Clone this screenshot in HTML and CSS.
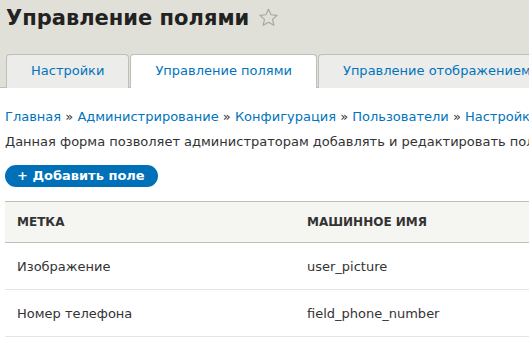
FILE: index.html
```html
<!DOCTYPE html>
<html>
<head>
    <link rel="stylesheet" href="styles.css">
</head>
<body>
    <header class="branding">
        <h1 class="page-title">
            Управление полями
            <svg class="star" width="21" height="21" viewBox="0 0 24 24">
                <path d="M12 2.5l2.9 6.3 6.9.7-5.2 4.6 1.5 6.8L12 17.4l-6.1 3.5 1.5-6.8-5.2-4.6 6.9-.7z" fill="none" stroke="#a6a6a0" stroke-width="1.3" stroke-linejoin="round"/>
            </svg>
        </h1>
        <ul class="tabs">
            <li class="tab"><a href="#">Настройки</a></li>
            <li class="tab active"><a href="#">Управление полями</a></li>
            <li class="tab"><a href="#">Управление отображением</a></li>
        </ul>
    </header>

    <main class="page">
        <nav class="breadcrumb">
            <a href="#">Главная</a> » <a href="#">Администрирование</a> » <a href="#">Конфигурация</a> » <a href="#">Пользователи</a> » <a href="#">Настройки учётных записей</a>
        </nav>
        <p class="help">Данная форма позволяет администраторам добавлять и редактировать поля для хранения данных пользователей.</p>

        <a href="#" class="button">+ Добавить поле</a>

        <table class="fields">
            <thead>
                <tr>
                    <th class="col-label">Метка</th>
                    <th>Машинное имя</th>
                </tr>
            </thead>
            <tbody>
                <tr>
                    <td>Изображение</td>
                    <td>user_picture</td>
                </tr>
                <tr>
                    <td>Номер телефона</td>
                    <td>field_phone_number</td>
                </tr>
            </tbody>
        </table>
    </main>
</body>
</html>
```

FILE: styles.css
```css
body {
    margin: 0;
    font-family: "DejaVu Sans", sans-serif;
    font-size: 13px;
    color: #333;
    background: #fff;
    overflow: hidden;
    width: 529px;
}

a {
    color: #0074bd;
    text-decoration: none;
}

.branding {
    background: #e0e0d8;
    padding: 0 0 0 6px;
    border-bottom: 1px solid #bfbfba;
}

.page-title {
    display: flex;
    align-items: center;
    gap: 9px;
    margin: 0;
    padding: 3px 0 0;
    font-size: 21px;
    line-height: 31px;
    color: #222;
    font-weight: bold;
    white-space: nowrap;
}

.star {
    margin-top: -2px;
}

.tabs {
    display: flex;
    margin: 20px 0 -1px;
    padding: 0;
    list-style: none;
    white-space: nowrap;
}

.tab {
    border: 1px solid #bfbfba;
    border-bottom: none;
    border-radius: 4px 4px 0 0;
    background: #ececea;
    margin-right: 1px;
}

.tab a {
    display: block;
    padding: 0 24px;
    line-height: 32px;
}

.tab.active {
    background: #fff;
    padding-bottom: 1px;
}

.page {
    padding: 0 5px;
}

.breadcrumb {
    margin-top: 19px;
    line-height: 20px;
    white-space: nowrap;
}

.help {
    margin: 5px 0 0;
    line-height: 20px;
    white-space: nowrap;
}

.button {
    display: inline-block;
    margin-top: 13px;
    padding: 0 13px 0 12px;
    line-height: 22px;
    background: #0071b8;
    color: #fff;
    font-weight: bold;
    border-radius: 12px;
}

.fields {
    margin-top: 14px;
    border-collapse: collapse;
    width: 600px;
}

.fields th {
    text-align: left;
    text-transform: uppercase;
    font-size: 12px;
    font-weight: bold;
    color: #333;
    background: #f5f5f2;
    border-top: 1px solid #bfbfba;
    border-bottom: 1px solid #bfbfba;
    padding: 0 12px;
    height: 40px;
}

.fields .col-label {
    width: 266px;
}

.fields td {
    padding: 0 12px;
    height: 46px;
    border-bottom: 1px solid #e6e4df;
}
```
